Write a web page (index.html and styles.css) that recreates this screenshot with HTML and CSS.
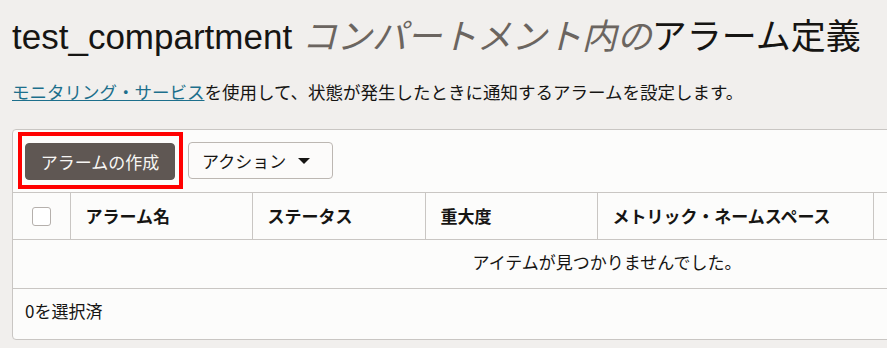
FILE: index.html
```html
<html>
<head>
<meta charset="utf-8">
<title>アラーム定義</title>
<link rel="stylesheet" href="styles.css">
</head>
<body>
<div class="page">
    <h1 class="title">test_compartment <em>コンパートメント内の</em>アラーム定義</h1>
    <p class="intro"><a href="#">モニタリング・サービス</a>を使用して、状態が発生したときに通知するアラームを設定します。</p>

    <div class="card">
        <div class="toolbar">
            <span class="highlight">
                <button class="btn primary">アラームの作成</button>
            </span>
            <button class="btn">アクション <span class="caret"></span></button>
        </div>
        <table class="grid">
            <thead>
                <tr>
                    <th class="check"><span class="box"></span></th>
                    <th class="c2">アラーム名</th>
                    <th class="c3">ステータス</th>
                    <th class="c4">重大度</th>
                    <th class="c5">メトリック・ネームスペース</th>
                    <th></th>
                </tr>
            </thead>
            <tbody>
                <tr class="empty">
                    <td colspan="6">アイテムが見つかりませんでした。</td>
                </tr>
            </tbody>
        </table>
        <div class="footer">0を選択済</div>
    </div>
</div>
</body>
</html>
```

FILE: styles.css
```css
html, body {
    margin: 0;
    overflow: hidden;
}

body {
    background: #f1efed;
    color: #161513;
    font-family: "Liberation Sans", "Noto Sans CJK JP", sans-serif;
}

.page {
    padding: 16px 0 0 12px;
}

.title {
    margin: 0;
    font-size: 35px;
    font-weight: normal;
    line-height: 42px;
    white-space: nowrap;
}

.title em {
    color: #6b6560;
}

.intro {
    margin: 23px 0 0;
    font-size: 17.5px;
    line-height: 24px;
    white-space: nowrap;
}

.intro a {
    color: #1d6f8c;
    text-decoration: underline;
}

.card {
    width: 1188px;
    margin-top: 24px;
    background: #fcfcfb;
    border: 1px solid #c9c6c3;
    border-radius: 4px;
}

.toolbar {
    display: flex;
    align-items: center;
    padding: 2px 5px 3px;
}

.highlight {
    display: flex;
    border: 4px solid #ff0000;
    padding: 7px 4px 5px 3px;
    margin-right: 5px;
}

.btn {
    height: 37px;
    padding: 0 22px 0 13px;
    font-family: "Noto Sans CJK JP", sans-serif;
    font-size: 17px;
    color: #161513;
    background: #fcfbfa;
    border: 1px solid #bcb7b2;
    border-radius: 4px;
    display: flex;
    align-items: center;
}

.btn.primary {
    width: 150px;
    padding: 0;
    justify-content: center;
    background: #5f5753;
    border-color: #5f5753;
    color: #f7f6f4;
}

.caret {
    display: inline-block;
    margin-left: 12px;
    border-left: 6px solid transparent;
    border-right: 6px solid transparent;
    border-top: 6px solid #161513;
}

.grid {
    width: 100%;
    table-layout: fixed;
    border-collapse: collapse;
    font-family: "Noto Sans CJK JP", sans-serif;
    font-size: 17px;
}

.grid th {
    box-sizing: border-box;
    height: 47px;
    padding: 0 15px 2px;
    text-align: left;
    font-weight: bold;
    white-space: nowrap;
    border-top: 1px solid #c9c6c3;
    border-left: 1px solid #c9c6c3;
}

.grid th:first-child {
    border-left: none;
}

.grid th.check {
    width: 57px;
    padding: 0 0 0 19px;
}

.grid th.c2 { width: 182px; }
.grid th.c3 { width: 173px; }
.grid th.c4 { width: 172px; }
.grid th.c5 { width: 276px; }

.box {
    display: block;
    width: 17px;
    height: 17px;
    border: 1px solid #b5b0ac;
    border-radius: 3px;
    background: #fff;
}

.grid td {
    box-sizing: border-box;
    height: 49px;
    padding: 0 0 5px;
    text-align: center;
    border-top: 1px solid #c9c6c3;
    border-bottom: 1px solid #c9c6c3;
}

.footer {
    height: 50px;
    line-height: 44px;
    padding-left: 12px;
    font-family: "Noto Sans CJK JP", sans-serif;
    font-size: 17px;
}
```
